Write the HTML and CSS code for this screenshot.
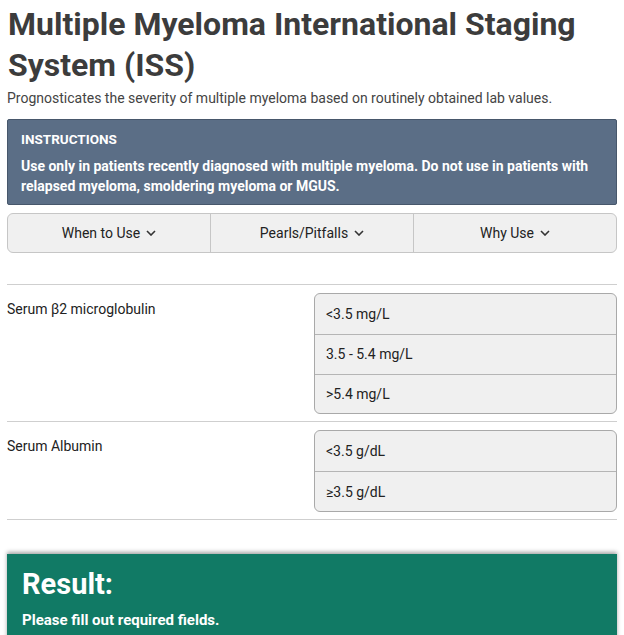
FILE: index.html
```html
<!DOCTYPE html>
<html lang="en">
<head>
    <meta charset="UTF-8">
    <title>Multiple Myeloma International Staging System (ISS)</title>
    <link rel="stylesheet" href="styles.css">
</head>
<body>
    <div class="page">
        <h1 class="title">Multiple Myeloma International Staging System (ISS)</h1>
        <p class="subtitle">Prognosticates the severity of multiple myeloma based on routinely obtained lab values.</p>

        <div class="instructions">
            <div class="instructions-head">INSTRUCTIONS</div>
            <p>Use only in patients recently diagnosed with multiple myeloma. Do not use in patients with relapsed myeloma, smoldering myeloma or MGUS.</p>
        </div>

        <div class="tabs">
            <div class="tab">When to Use <svg class="chev" viewBox="0 0 10 6"><path d="M1 1l4 4 4-4"/></svg></div>
            <div class="tab">Pearls/Pitfalls <svg class="chev" viewBox="0 0 10 6"><path d="M1 1l4 4 4-4"/></svg></div>
            <div class="tab">Why Use <svg class="chev" viewBox="0 0 10 6"><path d="M1 1l4 4 4-4"/></svg></div>
        </div>

        <div class="inputs">
            <div class="row">
                <div class="label">Serum β2 microglobulin</div>
                <div class="options">
                    <div class="option">&lt;3.5 mg/L</div>
                    <div class="option">3.5 - 5.4 mg/L</div>
                    <div class="option">&gt;5.4 mg/L</div>
                </div>
            </div>
            <div class="row">
                <div class="label">Serum Albumin</div>
                <div class="options">
                    <div class="option">&lt;3.5 g/dL</div>
                    <div class="option">≥3.5 g/dL</div>
                </div>
            </div>
        </div>

        <div class="result">
            <div class="result-title">Result:</div>
            <div class="result-text">Please fill out required fields.</div>
        </div>
    </div>
</body>
</html>
```

FILE: styles.css
```css
* {
    box-sizing: border-box;
}

body {
    margin: 0;
    background: #fff;
    font-family: Roboto, "Liberation Sans", sans-serif;
    color: #222;
}

.page {
    padding: 0 7px;
}

/* 标题 */
.title {
    margin: 0;
    padding: 4px 0 0 1px;
    font-size: 32px;
    line-height: 41px;
    font-weight: 700;
    color: #3c3c3c;
}

.subtitle {
    margin: 2px 0 0;
    font-size: 14px;
    line-height: 20px;
    color: #444;
}

/* 说明框 */
.instructions {
    margin-top: 11px;
    background: #5b6e86;
    border: 1px solid #47576b;
    border-radius: 2px;
    padding: 10px 13px 8px;
    color: #fff;
}

.instructions-head {
    font-size: 13.5px;
    font-weight: 700;
    line-height: 18px;
}

.instructions p {
    margin: 9px 0 0;
    font-size: 14px;
    font-weight: 700;
    line-height: 19.5px;
}

/* 选项卡 */
.tabs {
    display: flex;
    margin-top: 8px;
    height: 40px;
    border: 1px solid #c6c6c6;
    border-radius: 6px;
    background: #f0f0f0;
}

.tab {
    flex: 1;
    display: flex;
    align-items: center;
    justify-content: center;
    gap: 6px;
    font-size: 14px;
    color: #222;
}

.tab + .tab {
    border-left: 1px solid #c6c6c6;
}

.chev {
    width: 10px;
    height: 6px;
    fill: none;
    stroke: #333;
    stroke-width: 1.6;
}

/* 输入行 */
.inputs {
    margin-top: 31px;
    border-top: 1px solid #cfcfcf;
}

.row {
    display: flex;
    padding: 8px 0 7px;
    border-bottom: 1px solid #cfcfcf;
}

.label {
    width: 307px;
    padding-top: 7px;
    font-size: 14px;
    line-height: 18px;
}

.options {
    flex: 1;
    border: 1px solid #a9a9a9;
    border-radius: 6px;
    background: #f0f0f0;
}

.option {
    height: 39.8px;
    display: flex;
    align-items: center;
    padding-left: 11px;
    font-size: 14px;
}

.option + .option {
    border-top: 1px solid #b5b5b5;
}

/* 结果 */
.result {
    margin-top: 34px;
    background: #117a65;
    box-shadow: 0 -2px 4px rgba(0, 0, 0, 0.35);
    padding: 12px 15px 14px;
    color: #fff;
}

.result-title {
    font-size: 29px;
    font-weight: 700;
    line-height: 36px;
}

.result-text {
    margin-top: 8px;
    font-size: 15px;
    font-weight: 700;
    line-height: 20px;
}
```
